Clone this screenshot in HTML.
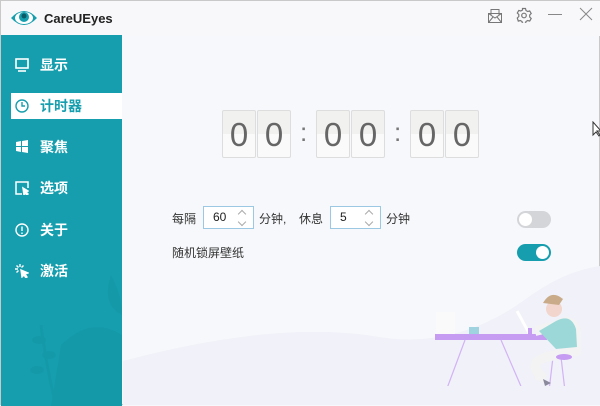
<!DOCTYPE html>
<html><head><meta charset="utf-8"><style>
*{margin:0;padding:0;box-sizing:border-box}
body{width:600px;height:405px;background:#f7f8fb;font-family:"Liberation Sans","Noto Sans CJK SC",sans-serif;position:relative;overflow:hidden;border:1px solid #c9c9c9}
.title{position:absolute;left:0;top:0;width:600px;height:35px;background:#f8f8fa}
.side{position:absolute;left:0;top:34px;width:121px;height:371px;background:#169eae;overflow:hidden}
.item{position:absolute;left:0;width:121px;height:26px;color:#fff;font-size:14px;font-weight:bold;line-height:26px}
.item .t{position:absolute;left:39px}
.item svg{position:absolute;left:14px;top:6px}
.item.act{left:10px;width:111px;background:#fff;color:#169eae}
.item.act .t{left:29px}.item.act svg{left:4px}
.d{position:absolute;top:109px;width:34px;height:48px;border:1px solid #ddd;border-radius:2px;background:linear-gradient(#f1f1ef 50%,#fafafa 50%);font-size:33px;color:#666;text-align:center;line-height:48px}
.c{position:absolute;top:116px;font-size:26px;color:#777}
.lab{position:absolute;font-size:12px;color:#333}
.inp{position:absolute;top:205px;width:51px;height:23px;border:1px solid #9cc8e3;background:#fff;font-size:12px;line-height:21px;padding-left:9px;color:#222}
.inp:after{content:"";position:absolute;right:8px;top:4px;width:5px;height:5px;border-left:1px solid #aaa;border-top:1px solid #aaa;transform:rotate(45deg)}
.inp:before{content:"";position:absolute;right:8px;top:12px;width:5px;height:5px;border-right:1px solid #aaa;border-bottom:1px solid #aaa;transform:rotate(45deg)}
.tg{position:absolute;left:516px;width:34px;height:17px;border-radius:9px}
.tg i{position:absolute;top:2px;width:13px;height:13px;border-radius:50%;background:#fff}
</style></head><body>
<div class="title">
<svg style="position:absolute;left:9px;top:7px" width="28" height="20" viewBox="0 0 28 20"><path d="M1 10 Q14 -4 27 10 Q14 24 1 10Z" fill="#169eae"/><ellipse cx="14" cy="10" rx="9" ry="6" fill="#fff"/><circle cx="14" cy="9" r="5" fill="#169eae"/><circle cx="14" cy="8" r="2.5" fill="#0c5a66"/></svg>
<div style="position:absolute;left:43px;top:10px;font-size:13px;font-weight:bold;color:#222">CareUEyes</div>
<svg style="position:absolute;left:486px;top:7px" width="16" height="16" viewBox="0 0 16 16" fill="none" stroke="#777"><rect x="1.5" y="5.5" width="13" height="9"/><path d="M1.5 5.5 L8 10 L14.5 5.5 M4 7V1.5h8V7 M1.5 14.5 L6 9 M14.5 14.5 L10 9"/></svg>
<svg style="position:absolute;left:515px;top:6px" width="16" height="16" viewBox="0 0 16 16" fill="none" stroke="#777" stroke-width="1.2"><path d="M6.5 1.5h3l.5 2 1.7 1 2-.6 1.5 2.6-1.5 1.5v2l1.5 1.5-1.5 2.6-2-.6-1.7 1-.5 2h-3l-.5-2-1.7-1-2 .6L1.3 11l1.5-1.5v-2L1.3 6 2.8 3.4l2 .6 1.7-1z"/><circle cx="8" cy="8.5" r="2.3"/></svg>
<div style="position:absolute;left:547px;top:13px;width:14px;height:1px;background:#888"></div>
<svg style="position:absolute;left:578px;top:6px" width="14" height="14" stroke="#888"><path d="M1 1L13 13M13 1L1 13"/></svg>
</div>
<div class="side">
<svg style="position:absolute;left:10px;top:240px;opacity:.09" width="111" height="131" viewBox="0 0 111 131"><path d="M50 70 Q80 40 111 60 V131 H40Z M100 0 Q111 20 111 40 Q90 30 100 0" fill="#0a6f80"/><path d="M30 50 Q35 90 45 131" stroke="#0a6f80" stroke-width="3" fill="none"/><ellipse cx="28" cy="65" rx="7" ry="4" fill="#0a6f80"/><ellipse cx="38" cy="80" rx="7" ry="4" fill="#0a6f80"/><ellipse cx="26" cy="95" rx="7" ry="4" fill="#0a6f80"/></svg>
<div class="item" style="top:17px"><svg width="14" height="14" fill="none" stroke="#fff" stroke-width="1.6"><rect x="1" y="1" width="12" height="9"/><path d="M3 13h8"/></svg><span class="t">显示</span></div>
<div class="item act" style="top:58px"><svg width="14" height="14" fill="none" stroke="#169eae" stroke-width="1.4"><circle cx="7" cy="7" r="6"/><path d="M7 3v4h3"/></svg><span class="t">计时器</span></div>
<div class="item" style="top:99px"><svg width="14" height="14" fill="#fff"><path d="M1 2l5-1v5H1z M7 1l6-1v6H7z M1 7h5v5l-5-1z M7 7h6v6l-6-1z"/></svg><span class="t">聚焦</span></div>
<div class="item" style="top:140px"><svg width="14" height="14" fill="none" stroke="#fff" stroke-width="1.5"><path d="M13 7V1H1v12h6"/><path d="M8 7l5 3-2 1 2 2-1 1-2-2-1 2z" fill="#fff"/></svg><span class="t">选项</span></div>
<div class="item" style="top:182px"><svg width="14" height="14" fill="none" stroke="#fff" stroke-width="1.4"><circle cx="7" cy="7" r="6"/><path d="M7 3.5v4.5M7 9.5v1.5"/></svg><span class="t">关于</span></div>
<div class="item" style="top:223px"><svg width="14" height="14" fill="none" stroke="#fff" stroke-width="1.4"><path d="M5 0v3M0 5h3M1.5 1.5l2 2M8.5 1.5l-2 2M1.5 8.5l2-2"/><path d="M6 6l7 3-3 1 2 3-1 1-2-3-2 2z" fill="#fff"/></svg><span class="t">激活</span></div>
</div>
<svg style="position:absolute;left:122px;top:260px" width="477" height="144" viewBox="0 0 477 144"><path d="M0 100 Q150 60 250 75 Q330 90 400 40 Q440 10 477 5 V144 H0Z" fill="#f0f1f9"/></svg>
<div class="d" style="left:221px">0</div><div class="d" style="left:256px">0</div><div class="c" style="left:299px">:</div>
<div class="d" style="left:315px">0</div><div class="d" style="left:350px">0</div><div class="c" style="left:393px">:</div>
<div class="d" style="left:409px">0</div><div class="d" style="left:444px">0</div>
<div class="lab" style="left:171px;top:209px">每隔</div>
<div class="inp" style="left:202px">60</div>
<div class="lab" style="left:258px;top:209px">分钟,</div>
<div class="lab" style="left:298px;top:209px">休息</div>
<div class="inp" style="left:329px">5</div>
<div class="lab" style="left:385px;top:209px">分钟</div>
<div class="lab" style="left:171px;top:243px">随机锁屏壁纸</div>
<div class="tg" style="top:210px;background:#d4d5d8"><i style="left:2px"></i></div>
<div class="tg" style="top:243px;background:#169eae"><i style="left:19px"></i></div>
<svg style="position:absolute;left:430px;top:280px" width="150" height="105" viewBox="0 0 150 105">
<rect x="5" y="31" width="19" height="23" fill="#fafafa"/><rect x="38" y="46" width="10" height="7" fill="#9fd3e0"/>
<path d="M86 30 L98 52" stroke="#fff" stroke-width="3"/>
<rect x="4" y="53" width="112" height="6" fill="#c59cf2"/><rect x="97" y="47" width="4" height="6" fill="#c59cf2"/>
<path d="M34 59 L15 110 M70 59 L92 110 M122 76 L118 110 M130 76 L134 110" stroke="#d3b2f5" stroke-width="1.2"/>
<path d="M104 50 L125 45 Q140 35 145 50 L145 70 L120 75 Q95 80 110 95 L108 100" stroke="#f3f3f3" stroke-width="10" fill="none"/>
<path d="M108 50 L125 40 Q140 32 145 48 L146 66 L125 68 Z" fill="#9dd8d8"/>
<circle cx="123" cy="28" r="8" fill="#f2d5cc"/><path d="M112 22 Q120 8 132 18 L128 24 Z" fill="#c9ab8a"/>
<ellipse cx="133" cy="76" rx="8" ry="3" fill="#c59cf2"/><path d="M112 98 l8 4 -6 3z" fill="#8a8a9c"/>
</svg>
<svg style="position:absolute;left:591px;top:120px" width="9" height="16"><path d="M1 1v13l3-3 3 4 1-1-3-4h4z" fill="#fff" stroke="#333"/></svg>
</body></html>
